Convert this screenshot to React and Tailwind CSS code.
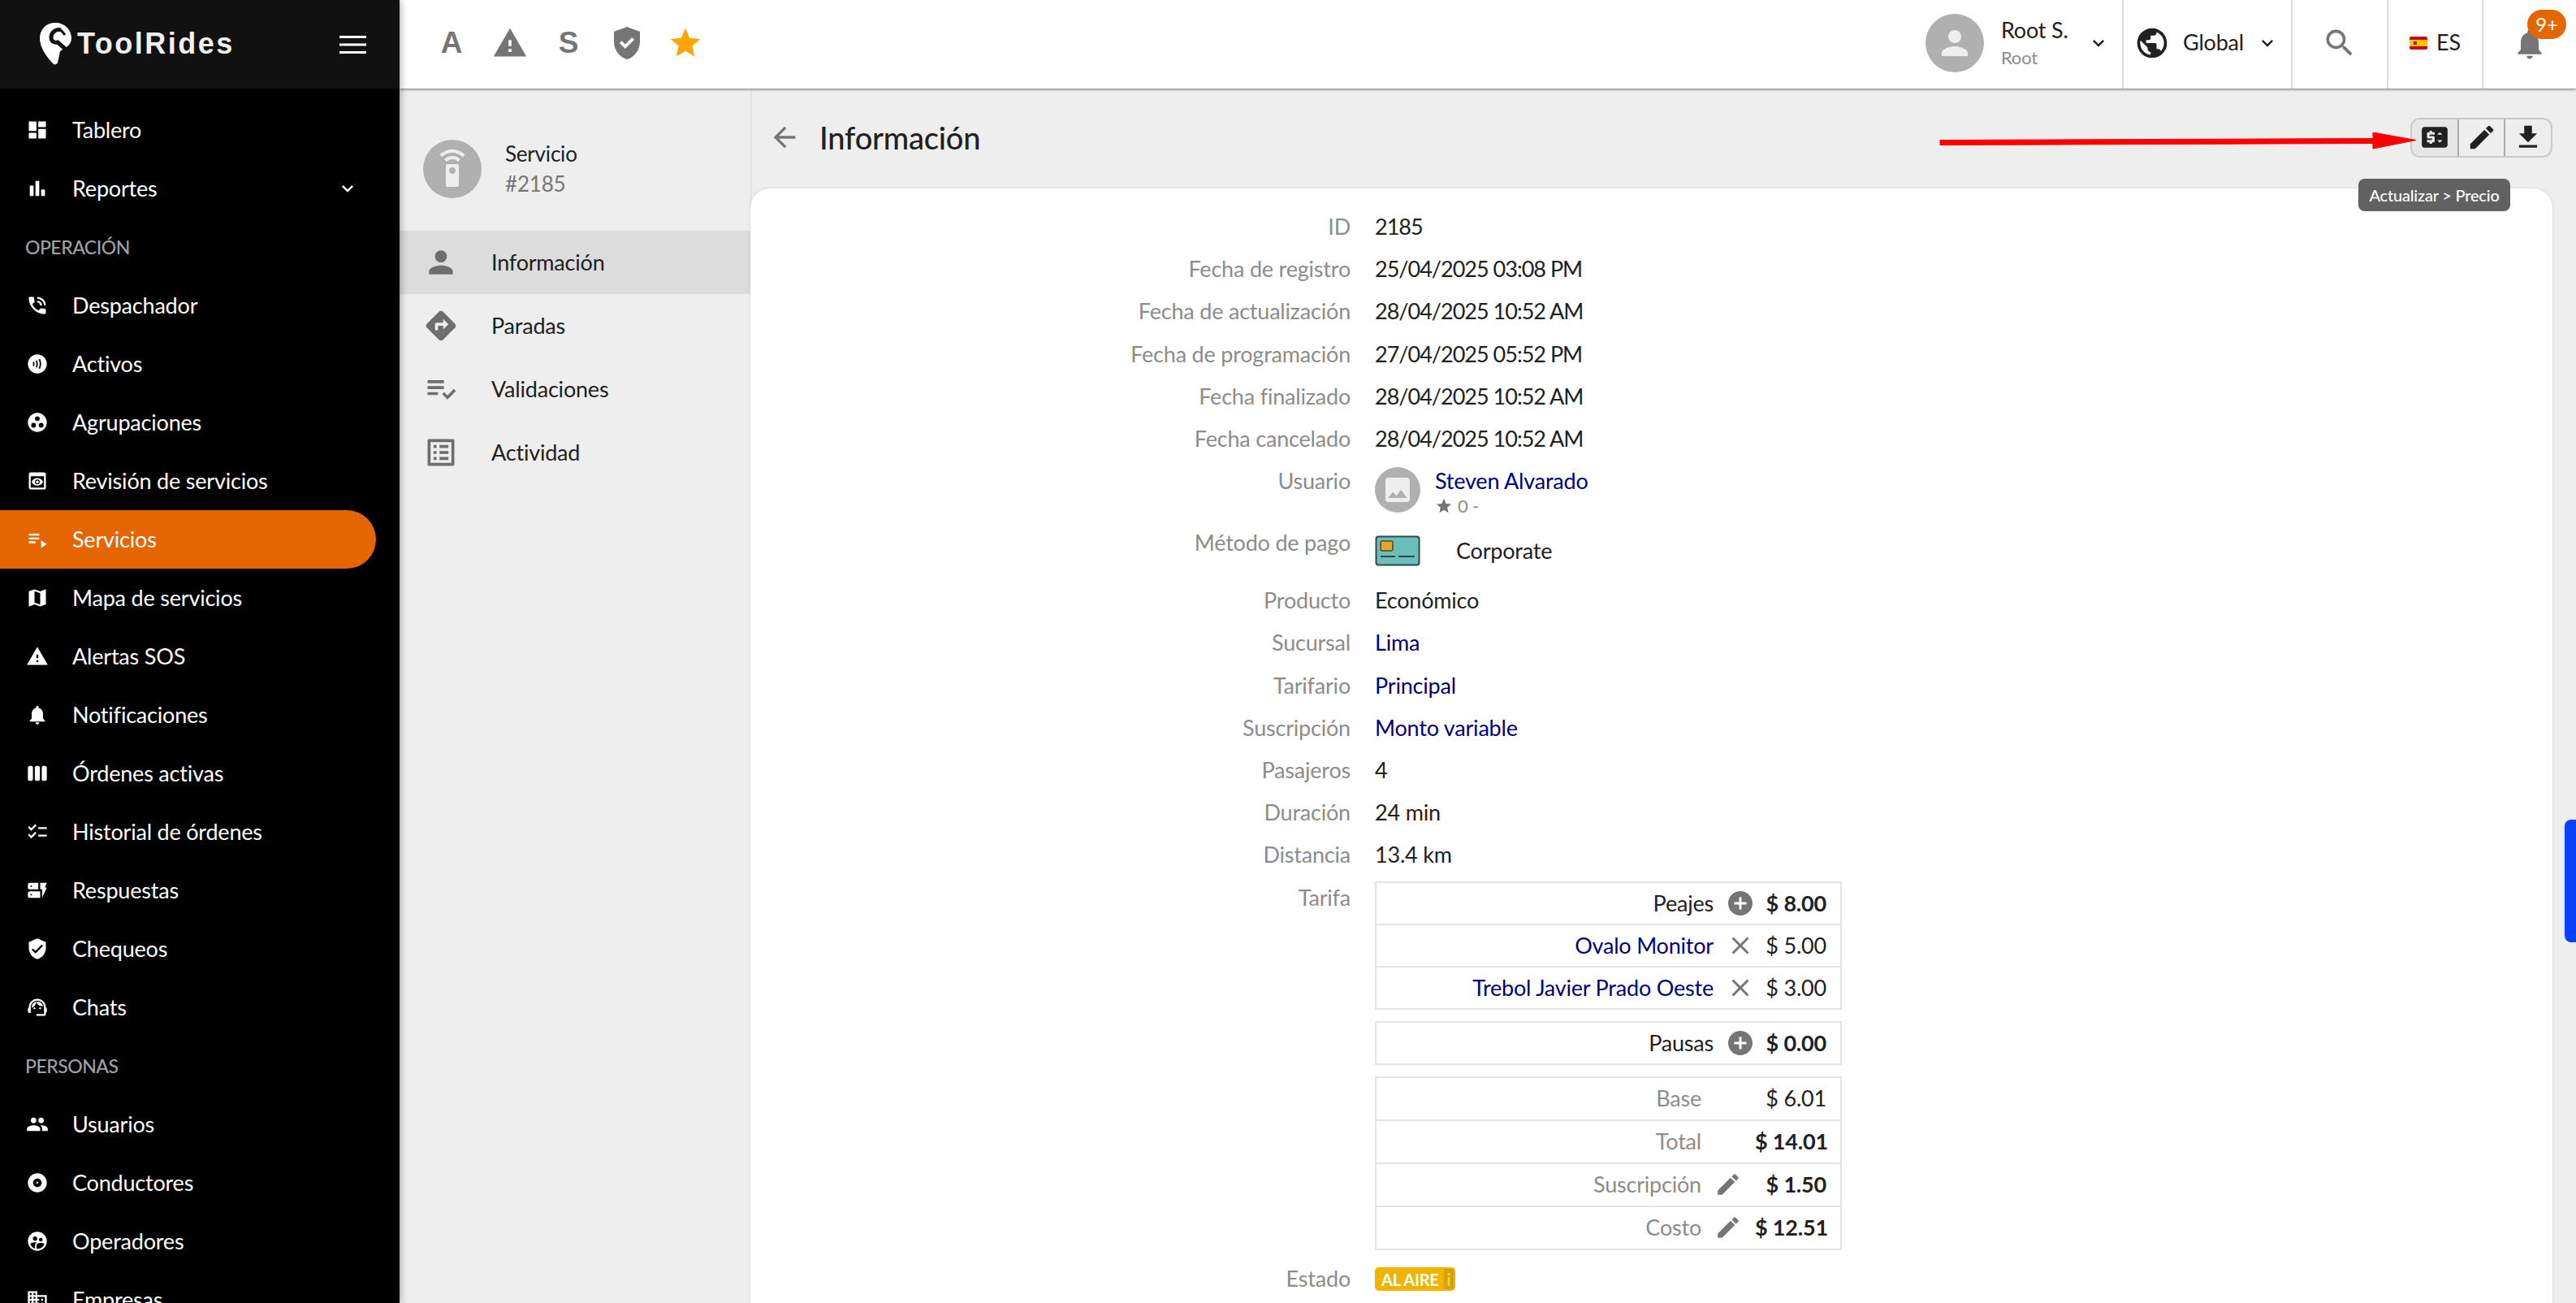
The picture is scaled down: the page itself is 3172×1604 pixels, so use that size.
import {
  MdDashboard, MdBarChart, MdKeyboardArrowDown, MdPhoneInTalk, MdContactless, MdGroupWork, MdPreview,
  MdPlaylistPlay, MdMap, MdWarning, MdNotifications, MdViewWeek, MdChecklist, MdDynamicForm, MdVerifiedUser,
  MdSupportAgent, MdPeople, MdAlbum, MdSupervisedUserCircle, MdDomain, MdGppGood, MdStar, MdPerson, MdPublic,
  MdSearch, MdArrowBack, MdPriceChange, MdEdit, MdFileDownload, MdDirections, MdPlaylistAddCheck, MdListAlt,
  MdSettingsRemote, MdImage, MdAddCircle, MdClose,
} from 'react-icons/md';

const operacion = [
  { icon: MdPhoneInTalk, label: 'Despachador' },
  { icon: MdContactless, label: 'Activos' },
  { icon: MdGroupWork, label: 'Agrupaciones' },
  { icon: MdPreview, label: 'Revisión de servicios' },
  { icon: MdPlaylistPlay, label: 'Servicios', active: true },
  { icon: MdMap, label: 'Mapa de servicios' },
  { icon: MdWarning, label: 'Alertas SOS' },
  { icon: MdNotifications, label: 'Notificaciones' },
  { icon: MdViewWeek, label: 'Órdenes activas' },
  { icon: MdChecklist, label: 'Historial de órdenes' },
  { icon: MdDynamicForm, label: 'Respuestas' },
  { icon: MdVerifiedUser, label: 'Chequeos' },
  { icon: MdSupportAgent, label: 'Chats' },
];

const personas = [
  { icon: MdPeople, label: 'Usuarios' },
  { icon: MdAlbum, label: 'Conductores' },
  { icon: MdSupervisedUserCircle, label: 'Operadores' },
  { icon: MdDomain, label: 'Empresas' },
];

const subnav = [
  { icon: MdPerson, label: 'Información', active: true },
  { icon: MdDirections, label: 'Paradas' },
  { icon: MdPlaylistAddCheck, label: 'Validaciones' },
  { icon: MdListAlt, label: 'Actividad' },
];

const fechas = [
  ['ID', '2185'],
  ['Fecha de registro', '25/04/2025 03:08 PM'],
  ['Fecha de actualización', '28/04/2025 10:52 AM'],
  ['Fecha de programación', '27/04/2025 05:52 PM'],
  ['Fecha finalizado', '28/04/2025 10:52 AM'],
  ['Fecha cancelado', '28/04/2025 10:52 AM'],
];

const NavItem = ({ icon: Icon, label, active, chevron }) => (
  <div className={`flex h-[72px] items-center pl-[32px] pr-[50px] text-white ${active ? 'mr-[29px] rounded-r-full bg-[#e56500]' : ''}`}>
    <Icon size={28} className="shrink-0" />
    <span className="ml-[29px] flex-1">{label}</span>
    {chevron && <MdKeyboardArrowDown size={28} />}
  </div>
);

const Section = ({ children }) => (
  <div className="flex h-[72px] items-center pl-[31px] text-[23px] font-medium tracking-[-0.5px] text-[#a0a0a0]">{children}</div>
);

const Logo = () => (
  <div className="flex items-center pb-[2px]">
    <svg width="42" height="52" viewBox="0 0 42 52">
      <path d="M20 0C9 0 1 8 1 19c0 12 9 24 17 32 2 1 4 0 5-2 1-4 2-9 3-14l8-5c4-3 6-7 6-11C40 8 31 0 20 0z" fill="#fff" />
      <path d="M27 9C21 7 15 12 15 18c0 5 4 7 8 6l16 14" fill="none" stroke="#111" strokeWidth="5" />
      <path d="M27 9l5 6" fill="none" stroke="#111" strokeWidth="3" />
    </svg>
    <span className="ml-[5px] font-['Liberation_Sans'] text-[36px] font-bold tracking-[2.5px] text-[#f0f0f0]">ToolRides</span>
  </div>
);

const SpainFlag = () => (
  <svg width="22" height="16" viewBox="0 0 22 16">
    <rect width="22" height="16" rx="2" fill="#c60b1e" />
    <rect y="4" width="22" height="8" fill="#ffc400" />
    <rect x="5" y="6" width="4" height="4" fill="#ad1519" />
  </svg>
);

const CardIcon = () => (
  <svg width="56" height="38" viewBox="0 0 56 38">
    <rect x="1.5" y="1.5" width="53" height="35" rx="3" fill="#6bbfb8" stroke="#2b4b52" strokeWidth="2" />
    <rect x="7" y="7" width="15" height="12" rx="2" fill="#e2a52d" stroke="#5b4a1e" strokeWidth="1.5" />
    <path d="M7 26h18M29 26h20" stroke="#2b4b52" strokeWidth="2" />
  </svg>
);

const Arrow = () => (
  <svg width="590" height="22" viewBox="0 0 590 22" className="absolute left-[2386px] top-[163px]">
    <path d="M3 9.5L536 7.5V0L589 9.5 536 20V13.5L3 15.5z" fill="#f00" stroke="#f00" strokeLinejoin="round" />
  </svg>
);

const Row = ({ label, children }) => (
  <div className="flex">
    <div className="h-[52.2px] w-[739px] shrink-0 text-right leading-[52.2px] text-[#8c8c8c]">{label}</div>
    <div className="pl-[30px] leading-[52.2px]">{children}</div>
  </div>
);

const FareRow = ({ label, icon, value, link, bold, gray, wide, h = 'h-[52px]' }) => (
  <div className={`flex ${h} items-center justify-end border-b-2 border-[#e4e4e4] pr-[17px]`}>
    <span className={link ? 'text-[#000080]' : gray ? 'text-[#8c8c8c]' : 'text-[#212121]'}>{label}</span>
    <span className={`ml-[15px] flex w-[36px] justify-center text-[#757575] ${wide ? 'mr-[15px]' : ''}`}>{icon}</span>
    <span className={`w-[88px] whitespace-nowrap text-right ${bold ? 'font-bold' : ''} text-[#212121]`}>{value}</span>
  </div>
);

const FareTable = ({ children, className = '' }) => (
  <div className={`w-[575px] border-x-2 border-t-2 border-[#e4e4e4] ${className}`}>{children}</div>
);

const App = () => {
  return (
    <div className="relative flex h-[1604px] w-[3172px] overflow-hidden bg-[#eeeeee] font-['Lato',sans-serif] text-[27px] tracking-[-0.2px] text-[#212121]">
      {/* main sidebar */}
      <aside className="z-20 w-[492px] shrink-0 bg-black shadow-[2px_0_8px_rgba(0,0,0,0.3)]">
        <div className="flex h-[109px] items-center justify-between bg-[#111111] pl-[48px] pr-[41px]">
          <Logo />
          <svg width="33" height="22" viewBox="0 0 33 22">
            <path d="M0 1.5h33M0 11h33M0 20.5h33" stroke="#fff" strokeWidth="3" />
          </svg>
        </div>
        <div className="pt-[15px]">
          <NavItem icon={MdDashboard} label="Tablero" />
          <NavItem icon={MdBarChart} label="Reportes" chevron />
          <Section>OPERACIÓN</Section>
          {operacion.map((item) => (
            <NavItem key={item.label} {...item} />
          ))}
          <Section>PERSONAS</Section>
          {personas.map((item) => (
            <NavItem key={item.label} {...item} />
          ))}
        </div>
      </aside>

      <div className="flex min-w-0 flex-1 flex-col">
        {/* top bar */}
        <header className="z-10 flex h-[109px] shrink-0 items-center justify-between bg-white pl-[28px] shadow-[0_1px_3px_rgba(0,0,0,0.55)]">
          <div className="flex items-center pb-[4px] text-[#757575]">
            <div className="flex w-[72px] justify-center font-['Liberation_Sans'] text-[37px] font-bold">A</div>
            <div className="flex w-[72px] justify-center"><MdWarning size={44} /></div>
            <div className="flex w-[72px] justify-center font-['Liberation_Sans'] text-[37px] font-bold">S</div>
            <div className="flex w-[72px] justify-center"><MdGppGood size={48} /></div>
            <div className="flex w-[72px] justify-center"><MdStar size={44} className="text-[#ffa500]" /></div>
          </div>
          <div className="flex h-full items-stretch">
            <div className="flex items-center pb-[4px] pr-[15px]">
              <div className="flex h-[72px] w-[72px] items-center justify-center rounded-full bg-[#b0b0b0]">
                <MdPerson size={48} className="text-[#eeeeee]" />
              </div>
              <div className="ml-[21px] w-[106px]">
                <div className="leading-[36px]">Root S.</div>
                <div className="text-[22px] leading-[32px] text-[#8c8c8c]">Root</div>
              </div>
              <MdKeyboardArrowDown size={28} />
            </div>
            <div className="flex items-center border-l-2 border-[#dddddd] pb-[4px] pl-[13px] pr-[15px]">
              <MdPublic size={44} />
              <span className="ml-[16px] w-[90px]">Global</span>
              <MdKeyboardArrowDown size={28} />
            </div>
            <div className="flex w-[118px] items-center justify-center border-l-2 border-[#dddddd] pb-[4px] text-[#757575]">
              <MdSearch size={44} />
            </div>
            <div className="flex w-[117px] items-center justify-center gap-[11px] border-l-2 border-[#dddddd] pb-[4px]">
              <SpainFlag />
              <span>ES</span>
            </div>
            <div className="relative flex w-[116px] items-center justify-center border-l-2 border-[#dddddd] pb-[2px] text-[#757575]">
              <MdNotifications size={44} />
              <span className="absolute right-[12px] top-[12px] flex h-[36px] w-[48px] items-center justify-center rounded-[18px] bg-[#e56500] text-[24px] text-white">9+</span>
            </div>
          </div>
        </header>

        <div className="flex min-h-0 flex-1">
          {/* service sidebar */}
          <div className="w-[432px] shrink-0 shadow-[1px_0_2px_rgba(0,0,0,0.1)]">
            <div className="flex h-[175px] items-center pl-[29px] pt-[22px]">
              <div className="flex h-[72px] w-[72px] items-center justify-center rounded-full bg-[#b0b0b0]">
                <MdSettingsRemote size={48} className="text-[#eeeeee]" />
              </div>
              <div className="ml-[29px] text-[26px] leading-[37px]">
                <div>Servicio</div>
                <div className="text-[#757575]">#2185</div>
              </div>
            </div>
            {subnav.map(({ icon: Icon, label, active }) => (
              <div key={label} className={`flex h-[78px] items-center pl-[29px] ${active ? 'bg-[#dcdcdc]' : ''}`}>
                <Icon size={44} className="shrink-0 text-[#6e6e6e]" />
                <span className="ml-[40px]">{label}</span>
              </div>
            ))}
          </div>

          {/* content */}
          <main className="min-w-0 flex-1 pr-[29px]">
            <div className="flex h-[123px] items-center justify-between pb-[3px]">
              <div className="flex items-center pl-[22px]">
                <MdArrowBack size={40} className="text-[#757575]" />
                <h1 className="ml-[23px] text-[38px] font-medium">Información</h1>
              </div>
              <div className="flex h-[49px] w-[175px] rounded-[12px] border-2 border-[#c8c8c8]">
                <div className="flex w-[58px] items-center justify-center rounded-l-[10px] border-r-2 border-[#aaaaaa] bg-[#e6e6e6]"><MdPriceChange size={38} /></div>
                <div className="flex w-[57px] items-center justify-center border-r-2 border-[#aaaaaa]"><MdEdit size={38} /></div>
                <div className="flex flex-1 items-center justify-center"><MdFileDownload size={38} /></div>
              </div>
            </div>
            <div className="h-[1400px] rounded-t-[24px] bg-white pt-[21px] shadow-[0_0_3px_rgba(0,0,0,0.15)]">
              {fechas.map(([label, value]) => (
                <Row key={label} label={label}><span className="tracking-[-1px]">{value}</span></Row>
              ))}
              <Row label="Usuario">
                <div className="flex h-[76px] pt-[9px]">
                  <div className="flex h-[56px] w-[56px] items-center justify-center rounded-full bg-[#b0b0b0]">
                    <MdImage size={40} className="text-[#eeeeee]" />
                  </div>
                  <div className="ml-[18px] -mt-[9px]">
                    <div className="text-[#000080]">Steven Alvarado</div>
                    <div className="-mt-[8px] flex items-center text-[22px] leading-[26px] text-[#8c8c8c]">
                      <MdStar size={22} className="mr-[6px] text-[#757575]" />0 -
                    </div>
                  </div>
                </div>
              </Row>
              <Row label="Método de pago">
                <div className="flex h-[71px] items-start pt-[17px]">
                  <CardIcon />
                  <span className="ml-[44px] leading-[38px]">Corporate</span>
                </div>
              </Row>
              <Row label="Producto">Económico</Row>
              <Row label="Sucursal"><span className="text-[#000080]">Lima</span></Row>
              <Row label="Tarifario"><span className="text-[#000080]">Principal</span></Row>
              <Row label="Suscripción"><span className="text-[#000080]">Monto variable</span></Row>
              <Row label="Pasajeros">4</Row>
              <Row label="Duración">24 min</Row>
              <Row label="Distancia">13.4 km</Row>
              <Row label="Tarifa">
                <div className="pb-[9px] pt-[6px]">
                  <FareTable>
                    <FareRow label="Peajes" icon={<MdAddCircle size={36} />} value="$ 8.00" bold />
                    <FareRow label="Ovalo Monitor" icon={<MdClose size={36} />} value="$ 5.00" link />
                    <FareRow label="Trebol Javier Prado Oeste" icon={<MdClose size={36} />} value="$ 3.00" link />
                  </FareTable>
                  <FareTable className="mt-[14px]">
                    <FareRow label="Pausas" icon={<MdAddCircle size={36} />} value="$ 0.00" bold />
                  </FareTable>
                  <FareTable className="mt-[14px]">
                    <FareRow label="Base" value="$ 6.01" gray wide h="h-[53px]" />
                    <FareRow label="Total" value="$ 14.01" gray wide bold h="h-[53px]" />
                    <FareRow label="Suscripción" icon={<MdEdit size={34} />} value="$ 1.50" gray wide bold h="h-[53px]" />
                    <FareRow label="Costo" icon={<MdEdit size={34} />} value="$ 12.51" gray wide bold h="h-[53px]" />
                  </FareTable>
                </div>
              </Row>
              <Row label="Estado">
                <div className="flex h-[52px] items-center pt-[2px]">
                  <div className="flex h-[29px] w-[99px] items-center justify-between rounded-[5px] bg-[#f0b400] pl-[8px] pr-[2px] text-[20px] font-bold leading-none text-white">
                    <span>AL AIRE</span>
                    <span className="flex h-[25px] w-[12px] items-center justify-center rounded-[3px] bg-[#d9a200] text-[#f5d060]">i</span>
                  </div>
                </div>
              </Row>
            </div>
          </main>
        </div>
      </div>

      <Arrow />
      <div className="absolute left-[2904px] top-[220px] z-30 flex h-[40px] w-[187px] items-center justify-center rounded-[8px] bg-[#616161] text-[20px] font-medium text-white">
        Actualizar &gt; Precio
      </div>
      <div className="absolute left-[3158px] top-[1009px] h-[151px] w-[14px] rounded-l-[8px] bg-[#0a40ff]" />
    </div>
  );
};

export default App;
